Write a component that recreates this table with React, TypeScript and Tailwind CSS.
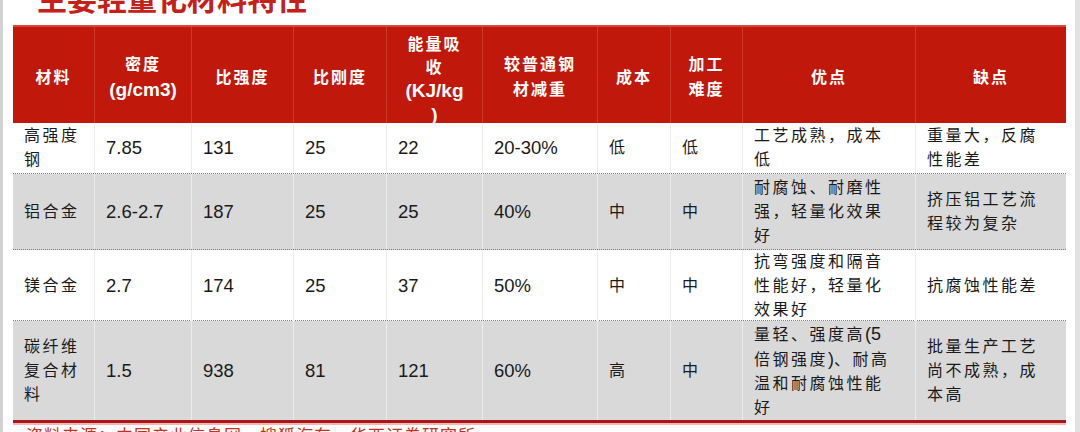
const cols = "grid grid-cols-[81px_97px_102px_93px_96px_115px_73px_72px_173px_151px]";

const cjk = "font-['Liberation_Sans','Noto_Sans_CJK_SC',sans-serif]";

type Row = {
  cells: React.ReactNode[];
  height: string;
  gray: boolean;
};

function Num({ children }: { children: React.ReactNode }) {
  return <span className="text-[18px] tracking-normal">{children}</span>;
}

const rows: Row[] = [
  {
    height: "h-[51px]",
    gray: false,
    cells: [
      <>高强度<br />钢</>,
      "7.85",
      "131",
      "25",
      "22",
      "20-30%",
      "低",
      "低",
      <>工艺成熟，成本<br />低</>,
      <>重量大，反腐<br />性能差</>,
    ],
  },
  {
    height: "h-[76px]",
    gray: true,
    cells: [
      "铝合金",
      "2.6-2.7",
      "187",
      "25",
      "25",
      "40%",
      "中",
      "中",
      <>耐腐蚀、耐磨性<br />强，轻量化效果<br />好</>,
      <>挤压铝工艺流<br />程较为复杂</>,
    ],
  },
  {
    height: "h-[71px]",
    gray: false,
    cells: [
      "镁合金",
      "2.7",
      "174",
      "25",
      "37",
      "50%",
      "中",
      "中",
      <>抗弯强度和隔音<br />性能好，轻量化<br />效果好</>,
      "抗腐蚀性能差",
    ],
  },
  {
    height: "h-[99px]",
    gray: true,
    cells: [
      <>碳纤维<br />复合材<br />料</>,
      "1.5",
      "938",
      "81",
      "121",
      "60%",
      "高",
      "中",
      <>量轻、强度高<Num>(5</Num><br />倍钢强度<Num>)</Num>、耐高<br />温和耐腐蚀性能<br />好</>,
      <>批量生产工艺<br />尚不成熟，成<br />本高</>,
    ],
  },
];

// columns holding CJK text get wider letter spacing, the rest hold figures
const cjkCols = [0, 6, 7, 8, 9];

function HeaderCell({ children, first, className = "" }: { children: React.ReactNode; first?: boolean; className?: string }) {
  return (
    <div
      className={`flex items-center justify-center text-center text-white font-bold text-[16px] tracking-[2px] ${
        first ? "" : "border-l border-[#cc3a2c]"
      } ${className}`}
    >
      <div>{children}</div>
    </div>
  );
}

function Latin({ children }: { children: React.ReactNode }) {
  return <span className="text-[19px] tracking-normal">{children}</span>;
}

export default function App() {
  return (
    <div className={`w-[1080px] h-[432px] overflow-hidden bg-white border-l-[3px] border-r-[5px] border-l-[#d2d2d2] border-r-[#e2e2e2] ${cjk}`}>
      <div className="pl-[34px] -mt-[15px] h-[30px] text-[30px] leading-[30px] font-bold text-[#c4211a]">
        主要轻量化材料特性
      </div>

      <div className="ml-[10px] mt-[10px] w-[1053px]">
        <div className={`${cols} h-[98px] bg-[#c0180b] border-t-2 border-[#d9473b] leading-[25px]`}>
          <HeaderCell first>材料</HeaderCell>
          <HeaderCell>
            密度
            <br />
            <Latin>(g/cm3)</Latin>
          </HeaderCell>
          <HeaderCell>比强度</HeaderCell>
          <HeaderCell>比刚度</HeaderCell>
          <HeaderCell className="leading-[23px] pt-[6px]">
            能量吸
            <br />
            收
            <br />
            <Latin>(KJ/kg</Latin>
            <br />
            <Latin>)</Latin>
          </HeaderCell>
          <HeaderCell>
            较普通钢
            <br />
            材减重
          </HeaderCell>
          <HeaderCell>成本</HeaderCell>
          <HeaderCell>
            加工
            <br />
            难度
          </HeaderCell>
          <HeaderCell>优点</HeaderCell>
          <HeaderCell>缺点</HeaderCell>
        </div>

        {rows.map((row, i) => (
          <div
            key={i}
            className={`${cols} ${row.height} ${row.gray ? "bg-[#d9d9d9]" : "bg-white"} ${
              i < rows.length - 1 ? "border-b border-dotted border-[#7a7a7a]" : ""
            }`}
          >
            {row.cells.map((cell, j) => (
              <div
                key={j}
                className={`flex items-center pl-[11px] leading-[24px] text-[#1a1a1a] ${
                  cjkCols.includes(j) ? "text-[16px] tracking-[2.5px]" : "text-[18.5px] tracking-normal"
                } ${j === 0 ? "" : "border-l border-[#ececec]"}`}
              >
                <div>{cell}</div>
              </div>
            ))}
          </div>
        ))}

        <div className="h-[3px] bg-[#a8161a]" />
        <div className="h-[2px] bg-[#f2b8b0]" />
      </div>

      <div className="pl-[23px] mt-[2px] text-[17px] leading-[20px] tracking-[1px] text-[#c4321f]">
        资料来源：中国产业信息网，搜狐汽车，华西证券研究所
      </div>
    </div>
  );
}
